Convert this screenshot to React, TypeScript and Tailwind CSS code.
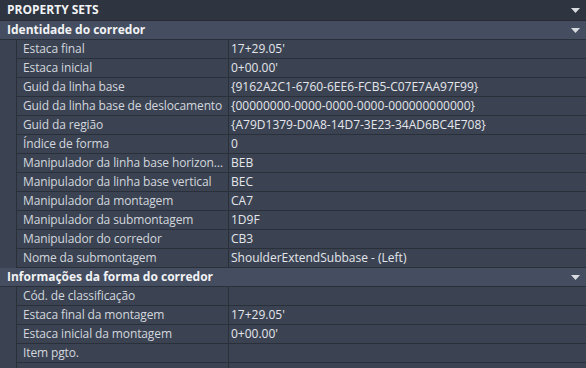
import { ReactNode } from "react";

type Row = { label: string; value?: string };

const identidade: Row[] = [
  { label: "Estaca final", value: "17+29.05'" },
  { label: "Estaca inicial", value: "0+00.00'" },
  { label: "Guid da linha base", value: "{9162A2C1-6760-6EE6-FCB5-C07E7AA97F99}" },
  { label: "Guid da linha base de deslocamento", value: "{00000000-0000-0000-0000-000000000000}" },
  { label: "Guid da região", value: "{A79D1379-D0A8-14D7-3E23-34AD6BC4E708}" },
  { label: "Índice de forma", value: "0" },
  { label: "Manipulador da linha base horizontal", value: "BEB" },
  { label: "Manipulador da linha base vertical", value: "BEC" },
  { label: "Manipulador da montagem", value: "CA7" },
  { label: "Manipulador da submontagem", value: "1D9F" },
  { label: "Manipulador do corredor", value: "CB3" },
  { label: "Nome da submontagem", value: "ShoulderExtendSubbase - (Left)" },
];

const forma: Row[] = [
  { label: "Cód. de classificação" },
  { label: "Estaca final da montagem", value: "17+29.05'" },
  { label: "Estaca inicial da montagem", value: "0+00.00'" },
  { label: "Item pgto." },
];

function Caret() {
  return (
    <svg width="9" height="5" viewBox="0 0 9 5" className="shrink-0">
      <path d="M0 0h9L4.5 5z" fill="#d8dbe0" />
    </svg>
  );
}

function SectionHeader({ children }: { children: ReactNode }) {
  return (
    <div className="flex h-[19px] items-center justify-between border-b border-[#2a303a] bg-[#454e60] pl-[7px] pr-[6px]">
      <span className="font-bold text-[#f2f3f5]">{children}</span>
      <Caret />
    </div>
  );
}

function PropRow({ row }: { row: Row }) {
  return (
    <div className="flex h-[19px]">
      <div className="w-[17px] shrink-0 border-r border-[#2a303a]" />
      <div className="flex flex-1 border-b border-[#2a303a]">
        <div className="w-[212px] shrink-0 truncate border-r border-[#2a303a] pl-[6px] pr-[1px] leading-[18px] tracking-[-0.12px] text-[#d3d7dd]">
          {row.label}
        </div>
        <div className="flex-1 truncate pl-[2px] leading-[18px] text-[#e4e6ea]">{row.value}</div>
      </div>
    </div>
  );
}

export default function App() {
  return (
    <div
      className="h-[368px] w-[586px] overflow-hidden bg-[#3b4353] text-[12px]"
      style={{ fontFamily: "'Open Sans', 'Noto Sans', sans-serif" }}
    >
      <div className="flex h-[21px] items-center justify-between border-b border-[#252a33] bg-[#2e3440] pl-[7px] pr-[6px]">
        <span className="font-bold text-[#f2f3f5]">PROPERTY SETS</span>
        <Caret />
      </div>
      <SectionHeader>Identidade do corredor</SectionHeader>
      {identidade.map((r) => (
        <PropRow key={r.label} row={r} />
      ))}
      <SectionHeader>Informações da forma do corredor</SectionHeader>
      {forma.map((r) => (
        <PropRow key={r.label} row={r} />
      ))}
      <div className="flex h-[19px]">
        <div className="w-[17px] shrink-0 border-r border-[#2a303a]" />
        <div className="w-[212px] shrink-0 border-r border-[#2a303a]" />
      </div>
    </div>
  );
}
